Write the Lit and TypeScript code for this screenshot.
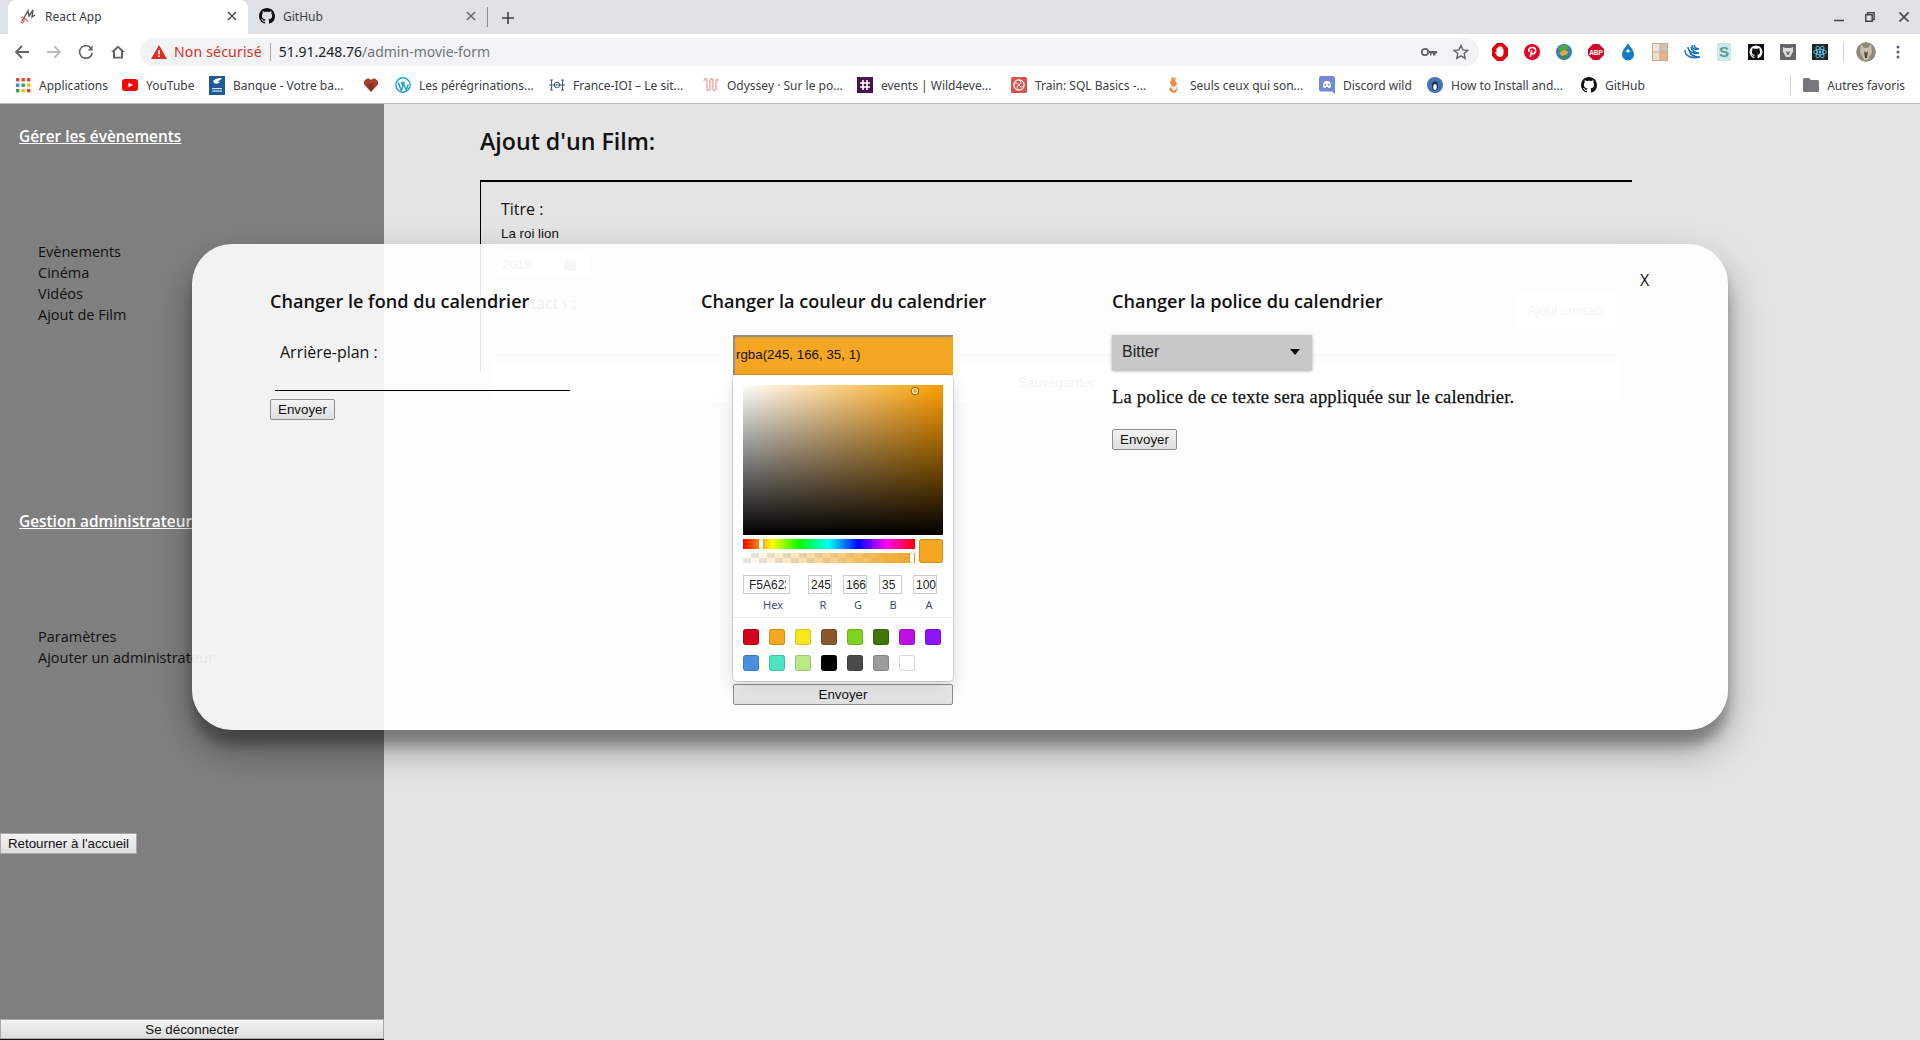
import { LitElement, html, svg, css } from "lit";
import { customElement } from "lit/decorators.js";

const OCTO = "M8 0C3.58 0 0 3.58 0 8c0 3.54 2.29 6.53 5.47 7.59.4.07.55-.17.55-.38 0-.19-.01-.82-.01-1.49-2.01.37-2.53-.49-2.69-.94-.09-.23-.48-.94-.82-1.13-.28-.15-.68-.52-.01-.53.63-.01 1.08.58 1.23.82.72 1.21 1.87.87 2.33.66.07-.52.28-.87.51-1.07-1.78-.2-3.64-.89-3.64-3.95 0-.87.31-1.59.82-2.15-.08-.2-.36-1.02.08-2.12 0 0 .67-.21 2.2.82.64-.18 1.32-.27 2-.27.68 0 1.36.09 2 .27 1.53-1.04 2.2-.82 2.2-.82.44 1.1.16 1.92.08 2.12.51.56.82 1.27.82 2.15 0 3.07-1.87 3.75-3.65 3.95.29.25.54.73.54 1.48 0 1.07-.01 1.93-.01 2.2 0 .21.15.46.55.38A8.013 8.013 0 0016 8c0-4.42-3.58-8-8-8z";

const octo = (fill = "#111") => html`<svg width="16" height="16" viewBox="0 0 16 16"><path fill=${fill} d=${OCTO}></path></svg>`;

const icons = {
  apps: html`<svg width="16" height="16" viewBox="0 0 16 16">
    ${[["#ea4335", "#ea4335", "#ea4335"], ["#4285f4", "#34a853", "#fbbc05"], ["#34a853", "#fbbc05", "#ea4335"]].map((row, y) =>
      row.map((c, x) => svg`<rect x=${1 + x * 5.5} y=${1 + y * 5.5} width="3.4" height="3.4" fill=${c}></rect>`))}
  </svg>`,
  youtube: html`<svg width="16" height="16" viewBox="0 0 16 16"><rect x="0" y="2" width="16" height="12" rx="3" fill="#f00"></rect><path d="M6.4 5.4v5.2L11 8z" fill="#fff"></path></svg>`,
  banque: html`<svg width="16" height="19" viewBox="0 0 16 19"><rect width="16" height="19" fill="#1d5c94"></rect><path d="M4 5c3-3 6-3 9-3-1 2-3 3-5 3l3 1c-2 2-4 2-6 1z" fill="#fff"></path><rect x="3" y="12" width="10" height="1.2" fill="#cfe0ee"></rect><rect x="3" y="14.5" width="10" height="1.2" fill="#cfe0ee"></rect></svg>`,
  heart: html`<svg width="16" height="14" viewBox="0 0 16 14"><path d="M8 14L1 6.5V3l3-2.5h2L8 2l2-1.5h2L15 3v3.5z" fill="#a8412f"></path><path d="M8 14L4 6l4-1 4 1z" fill="#8c2f22"></path></svg>`,
  wp: html`<svg width="16" height="16" viewBox="0 0 16 16"><circle cx="8" cy="8" r="7.2" fill="none" stroke="#21a0d2" stroke-width="1.4"></circle><path d="M3.2 5.6l3.1 7.8 1.7-4.8-1.2-3M6 5.6h3.6M8.2 5.6l3 7.6 2-5.6" fill="none" stroke="#21a0d2" stroke-width="1.5"></path></svg>`,
  ioi: html`<svg width="16" height="12" viewBox="0 0 16 12"><path d="M1 1h3M2.500 1v10M1 11h3M12 1h3M13.500 1v10M12 11h3" stroke="#3d5a80" stroke-width="1" fill="none"></path><circle cx="8" cy="6" r="2.800" fill="none" stroke="#3d5a80"></circle><path d="M0 6h16" stroke="#3d5a80"></path></svg>`,
  odyssey: html`<svg width="16" height="14" viewBox="0 0 16 14"><path d="M1 3c0-3 3-3 3 0v7c0 3 3 3 3 0V3c0-3 3-3 3 0v7c0 3 3 3 3 0V3c0-2 2-2 2 0" fill="none" stroke="#f4a6a6" stroke-width="1.400"></path></svg>`,
  slack: html`<svg width="16" height="16" viewBox="0 0 16 16"><rect width="16" height="16" fill="#4a154b"></rect><path d="M6 3v10M10 3v10M3 6h10M3 10h10" stroke="#fff" stroke-width="1.600"></path><path d="M7 7h2v2H7z" fill="#4a154b"></path></svg>`,
  sql: html`<svg width="16" height="16" viewBox="0 0 16 16"><rect width="16" height="16" rx="1.500" fill="#d9534f"></rect><circle cx="8" cy="8" r="5.200" fill="none" stroke="#fff" stroke-width="1.200"></circle><path d="M8 3c3 2 2 4 0 5s-3 3 0 5M3 8c2-3 4-2 5 0s3 3 5 0" fill="none" stroke="#fff" stroke-width="1"></path></svg>`,
  seuls: html`<svg width="14" height="18" viewBox="0 0 14 18"><path d="M5 1l4 1-1 3 2 2-1 3 2 3-3 4-4-1-2-3 3-3-2-3z" fill="#f08a3c"></path><path d="M4 11l5-1 1 3-4 2z" fill="#eee"></path><path d="M5 1l3 1-1 2z" fill="#ccc"></path></svg>`,
  discord: html`<svg width="16" height="18" viewBox="0 0 16 18"><path d="M2.500 0h11A2.500 2.500 0 0116 2.500V18l-3-2.500H2.500A2.500 2.500 0 010 13V2.500A2.500 2.500 0 012.500 0z" fill="#7289da"></path><path d="M4 11c-.2-2.500.5-4.500 1.500-5.500 1.500-.6 3.500-.6 5 0C11.500 6.500 12.200 8.500 12 11c-1 .8-2 1-2.500 1L9 11H7l-.5 1c-.5 0-1.500-.2-2.500-1z" fill="#fff"></path><circle cx="6.300" cy="8.800" r="1" fill="#7289da"></circle><circle cx="9.700" cy="8.800" r="1" fill="#7289da"></circle></svg>`,
  howto: html`<svg width="16" height="16" viewBox="0 0 16 16"><circle cx="8" cy="8" r="8" fill="#4472b8"></circle><ellipse cx="8" cy="9" rx="3" ry="4.500" fill="#1b2a3f"></ellipse><ellipse cx="8" cy="10" rx="1.800" ry="3" fill="#fff"></ellipse></svg>`,
  folder: html`<svg width="16" height="14" viewBox="0 0 16 14"><path d="M1.500 0H6l2 2h6.500A1.500 1.500 0 0116 3.500v9a1.500 1.500 0 01-1.500 1.500h-13A1.500 1.500 0 010 12.500v-11A1.500 1.500 0 011.500 0z" fill="#75787c"></path></svg>`,
};

const bookmarks = [
  { icon: icons.apps, label: "Applications", width: 107 },
  { icon: icons.youtube, label: "YouTube", width: 87 },
  { icon: icons.banque, label: "Banque - Votre ba...", width: 154 },
  { icon: icons.heart, label: "", width: 32 },
  { icon: icons.wp, label: "Les pérégrinations...", width: 154 },
  { icon: icons.ioi, label: "France-IOI – Le sit...", width: 154 },
  { icon: icons.odyssey, label: "Odyssey · Sur le po...", width: 154 },
  { icon: icons.slack, label: "events | Wild4eve...", width: 154 },
  { icon: icons.sql, label: "Train: SQL Basics -...", width: 155 },
  { icon: icons.seuls, label: "Seuls ceux qui son...", width: 153 },
  { icon: icons.discord, label: "Discord wild", width: 108 },
  { icon: icons.howto, label: "How to Install and...", width: 154 },
  { icon: octo(), label: "GitHub", width: 100 },
];

const extensions = [
  html`<svg width="16" height="18" viewBox="0 0 16 18"><path d="M5 0h6l5 5v8l-5 5H5l-5-5V5z" fill="#e2000f"></path><path d="M4.500 9V5.500a.8.800 0 011.500 0V4a.8.800 0 011.500 0v-.3a.8.800 0 011.500 0V4a.8.800 0 011.500 0v2a.8.800 0 011 0v4c0 2.500-1.500 4-3.500 4S5 13 4 11L3 9.500c.4-.6 1-.6 1.500-.5z" fill="#fff"></path></svg>`,
  html`<svg width="16" height="18" viewBox="0 0 16 16"><circle cx="8" cy="8" r="8" fill="#e60023"></circle><path d="M6.300 13l1.500-7M5 8c-1-3 1-4.500 3.300-4.500S12 5 11.500 7.500 8.500 10.500 7.500 9" fill="none" stroke="#fff" stroke-width="1.600"></path></svg>`,
  html`<svg width="16" height="16" viewBox="0 0 16 16"><circle cx="8" cy="8" r="8" fill="#2f7ec2"></circle><path d="M2 4c3-3 7-4 10-2l1 3-4 2-5 1z" fill="#57a646"></path><path d="M3 9l5-3 5 2-3 3-4 1z" fill="#e8a93a"></path><path d="M5 13l6-2 1 2-3 3z" fill="#3a8f4a"></path></svg>`,
  html`<svg width="16" height="16" viewBox="0 0 16 16"><path d="M5 0h6l5 5v6l-5 5H5l-5-5V5z" fill="#c70d2c"></path><text x="8" y="10.500" text-anchor="middle" font-family="Liberation Sans" font-size="6.500" font-weight="700" fill="#fff">ABP</text></svg>`,
  html`<svg width="12" height="18" viewBox="0 0 12 18"><path d="M6 0c2 4 6 7 6 11.500A6 6 0 010 11.500C0 7 4 4 6 0z" fill="#0f7dc2"></path><path d="M1.500 10L4 8l2 2 2-2 2.500 2L6 6z" fill="#fff"></path></svg>`,
  html`<svg width="16" height="18" viewBox="0 0 16 18"><rect width="16" height="18" fill="#bbada0"></rect><rect x="1" y="1" width="6.500" height="7.500" fill="#eee4da"></rect><rect x="8.500" y="1" width="6.500" height="7.500" fill="#cdc1b4"></rect><rect x="1" y="9.500" width="6.500" height="7.500" fill="#ede0c8"></rect><rect x="8.500" y="9.500" width="6.500" height="7.500" fill="#f2b179"></rect></svg>`,
  html`<svg width="16" height="18" viewBox="0 0 16 18"><path d="M1 7c0 6 6 9 15 7-6 0-10-2-11-7M4 4c0 5 5 7 11 6-5 0-7-2-8-6M8 2c0 4 3 5 7 4-3 0-4-1-5-4" fill="none" stroke="#1a78c2" stroke-width="1.500"></path></svg>`,
  html`<svg width="16" height="18" viewBox="0 0 16 18"><rect x="1" y="0" width="14" height="18" fill="#cfe9e6"></rect><text x="8" y="14" text-anchor="middle" font-family="Liberation Sans" font-size="15" font-weight="700" fill="#4e9c95">S</text></svg>`,
  html`<svg width="16" height="16" viewBox="0 0 16 16"><rect width="16" height="16" fill="#111"></rect><g transform="translate(1.500 1.500) scale(.81)"><path fill="#fff" d=${OCTO}></path></g></svg>`,
  html`<svg width="16" height="16" viewBox="0 0 16 16"><rect width="16" height="16" fill="#666"></rect><path d="M3 3l2 1h6l2-1v5l-3 5H6L3 8z" fill="#ddd"></path><path d="M6 7l2 1 2-1-1 4H7z" fill="#777"></path></svg>`,
  html`<svg width="16" height="16" viewBox="0 0 16 16"><rect width="16" height="16" fill="#20232a"></rect><g fill="none" stroke="#61dafb" stroke-width=".8"><ellipse cx="8" cy="8" rx="6.500" ry="2.600"></ellipse><ellipse cx="8" cy="8" rx="6.500" ry="2.600" transform="rotate(60 8 8)"></ellipse><ellipse cx="8" cy="8" rx="6.500" ry="2.600" transform="rotate(120 8 8)"></ellipse></g><circle cx="8" cy="8" r="1.300" fill="#61dafb"></circle></svg>`,
];

const swatches = [
  "#D0021B", "#F5A623", "#F8E71C", "#8B572A", "#7ED321", "#417505", "#BD10E0", "#9013FE",
  "#4A90E2", "#50E3C2", "#B8E986", "#000000", "#4A4A4A", "#9B9B9B", "#FFFFFF",
];

@customElement("app-root")
export class AppRoot extends LitElement {
  static styles = css`
    :host {
      display: flex;
      flex-direction: column;
      position: relative;
      width: 1920px;
      height: 1040px;
      overflow: hidden;
      font-family: "Open Sans", sans-serif;
      color: #111;
    }

    /* browser chrome */
    .ui { font-family: "Noto Sans", sans-serif; font-size: 12px; color: #3c4043; }
    .tabstrip {
      display: flex;
      align-items: flex-end;
      height: 34px;
      background: #dee1e6;
      padding-left: 8px;
      flex: none;
    }
    .tab {
      display: flex;
      align-items: center;
      width: 240px;
      height: 34px;
      padding: 0 11px 2px 12px;
      box-sizing: border-box;
      gap: 9px;
    }
    .tab.active { background: #fff; border-radius: 8px 8px 0 0; }
    .tab .title { flex: 1; }
    .tab-sep { width: 1px; height: 20px; background: #888c91; margin: 0 0 7px 0; }
    .tab.second { width: 239px; padding-left: 11px; gap: 8px; }
    .plus { margin: 0 0 10px 14px; display: flex; }
    .win { margin-left: auto; display: flex; gap: 16px; align-items: center; padding: 0 11px 9px 0; height: 16px; }
    .win svg { display: block; }
    .win .restore { margin-left: 5px; }
    .win .shut { margin-left: 8px; }

    .toolbar {
      display: flex;
      align-items: center;
      height: 36px;
      padding: 0 6px;
      background: #fff;
      flex: none;
    }
    .slot { width: 32px; height: 28px; display: flex; align-items: center; justify-content: center; flex: none; }
    .omni {
      display: flex;
      align-items: center;
      flex: 1;
      height: 28px;
      margin: 0 5px 0 6px;
      padding: 0 2px 0 11px;
      background: #f1f3f4;
      border-radius: 14px;
      font-size: 14px;
    }
    .omni > span { padding-bottom: 2px; }
    .insecure { color: #d93025; margin-left: 7px; letter-spacing: 0.2px; }
    .omni > .omni-sep { width: 1px; height: 18px; padding: 0; background: #a9acb0; margin: 0 8px 0 8px; }
    .host { color: #202124; }
    .path { color: #6f7479; }
    .omni-right { margin-left: auto; display: flex; align-items: center; gap: 0; }
    .tool-sep { width: 1px; height: 20px; background: #d2d4d7; margin: 0 12px 0 7px; flex: none; }
    .avatar { width: 20px; height: 20px; border-radius: 50%; display: block; flex: none; }
    .dots { margin-left: 6px; }

    .bookmarks {
      display: flex;
      align-items: center;
      height: 34px;
      box-sizing: border-box;
      padding: 0 0 3px 15px;
      background: #fff;
      border-bottom: 1px solid #b7b9bb;
      flex: none;
    }
    .bm { display: flex; align-items: center; gap: 8px; flex: none; white-space: nowrap; }
    .bm .ic { width: 16px; display: flex; justify-content: center; flex: none; }
    .bm-end { margin-left: auto; display: flex; align-items: center; gap: 8px; padding-right: 15px; }
    .bm-sep { width: 1px; height: 20px; background: #d2d4d7; margin-right: 4px; }

    /* page */
    .page { display: flex; flex: 1; min-height: 0; background: #e4e4e4; }
    .sidebar {
      display: flex;
      flex-direction: column;
      width: 384px;
      flex: none;
      box-sizing: border-box;
      background: #7f7f7f;
      border-bottom: 1px solid #111;
      padding-top: 22px;
    }
    .side-title {
      margin-left: 19px;
      color: #fff;
      font-size: 15.4px;
      font-weight: 600;
      line-height: 22px;
      text-decoration: underline;
      white-space: nowrap;
    }
    .side-list {
      list-style: none;
      margin: 93px 0 0 38px;
      padding: 0;
      font-size: 14.5px;
      line-height: 21px;
      white-space: nowrap;
    }
    .side-title.second { margin-top: 186px; }
    button {
      font-family: "Liberation Sans", sans-serif;
      font-size: 13.333px;
      height: 21px;
      padding: 0 6px;
      background: linear-gradient(#f4f4f4, #dedede);
      border: 1px solid #8e8e8e;
      border-radius: 2px;
      color: #111;
      box-sizing: border-box;
    }
    .back { align-self: flex-start; width: 137px; margin-top: 165px; border-color: #a9a9a9; border-radius: 0; }
    .logout { width: 100%; height: 20px; margin-top: auto; padding: 0; border-color: #a9a9a9; border-radius: 0; }

    .main { flex: 1; padding: 21px 0 0 96px; }
    .main h1 { margin: 0 0 22px; font-size: 23.2px; font-weight: 600; line-height: 33px; white-space: nowrap; }
    .form {
      width: 1152px;
      height: 192px;
      box-sizing: border-box;
      border-top: 2px solid #000;
      border-left: 1px solid #000;
      padding: 16px 0 0 15px;
    }
    .field-label { margin-left: 5px; font-size: 16px; line-height: 22px; }
    .field-value {
      width: 1121px;
      box-sizing: border-box;
      margin-top: 6px;
      padding: 0 0 5px 5px;
      border-bottom: 2px solid #c9c9c9;
      font: 13.333px/15px "Liberation Sans", sans-serif;
    }
    .date {
      display: flex;
      align-items: center;
      justify-content: space-between;
      width: 93px;
      height: 21px;
      box-sizing: border-box;
      margin: 6px 0 0 1px;
      padding: 0 14px 0 5px;
      background: #fff;
      border-radius: 3px;
      font: 13.333px "Liberation Sans", sans-serif;
      color: #888;
    }
    .contact-row {
      display: flex;
      justify-content: space-between;
      width: 1121px;
      height: 65px;
      box-sizing: border-box;
      margin-top: 16px;
      border-bottom: 2px solid #c9c9c9;
    }
    .contact-row .field-label { margin-top: 1px; color: #666; }
    .add-contact {
      width: 102px;
      height: 38px;
      background: #fff;
      border: 1px solid #d8d8d8;
      color: #888;
    }
    .save {
      width: 1131px;
      height: 43px;
      box-sizing: border-box;
      margin: 5px 0 0 -5px;
      padding-right: 1px;
      display: flex;
      align-items: center;
      justify-content: center;
      background: #fff;
      border: 1px solid #d8d8d8;
      font: 13.333px "Liberation Sans", sans-serif;
      color: #888;
    }

    /* modal */
    .modal {
      position: absolute;
      left: 192px;
      top: 244px;
      width: 1536px;
      height: 486px;
      box-sizing: border-box;
      display: flex;
      padding: 44px 0 0 78px;
      background: rgba(255, 255, 255, 0.9);
      border-radius: 40px;
      box-shadow: 0 19px 38px rgba(0, 0, 0, 0.34), 0 15px 12px rgba(0, 0, 0, 0.26);
    }
    .close { position: absolute; left: 1448px; top: 25px; font-size: 16px; line-height: 22px; }
    .col { flex: none; }
    .col.one { width: 431px; }
    .col.two { width: 411px; }
    .col h2 { margin: 0; font-size: 18.1px; font-weight: 600; line-height: 26px; white-space: nowrap; }
    .bg-label { margin: 27px 0 0 10px; font-size: 16px; line-height: 22px; }
    .bg-line { width: 295px; height: 1px; margin: 27px 0 0 5px; background: #000; }
    .col.one button { display: block; margin-top: 8px; width: 65px; }

    .color-input {
      width: 220px;
      height: 40px;
      box-sizing: border-box;
      margin: 21px 0 0 32px;
      padding: 0 0 3px 1px;
      display: flex;
      align-items: center;
      background: #f5a623;
      border-top: 2px solid #8f8f8f;
      border-left: 2px solid #8f8f8f;
      font: 13.333px "Liberation Sans", sans-serif;
    }
    .picker {
      width: 220px;
      height: 306px;
      box-sizing: border-box;
      margin-left: 32px;
      padding: 10px;
      background: #fff;
      border-radius: 4px;
      box-shadow: 0 0 0 1px rgba(0, 0, 0, 0.12), 0 8px 16px rgba(0, 0, 0, 0.15);
      position: relative;
    }
    .sat {
      position: relative;
      width: 200px;
      height: 150px;
      background: linear-gradient(to top, #000, transparent), linear-gradient(to right, #fff, #ff9e00);
    }
    .sat i {
      position: absolute;
      left: 169px;
      top: 3px;
      width: 4px;
      height: 4px;
      border: 1.5px solid #fff;
      border-radius: 50%;
      box-shadow: 0 0 1px 1px rgba(0, 0, 0, 0.4);
    }
    .sliders { display: flex; justify-content: space-between; margin-top: 4px; }
    .bars { width: 172px; }
    .hue, .alpha { position: relative; height: 10px; }
    .hue { background: linear-gradient(to right, #f00 0%, #ff0 17%, #0f0 33%, #0ff 50%, #00f 67%, #f0f 83%, #f00 100%); }
    .alpha {
      margin-top: 4px;
      background: linear-gradient(to right, rgba(245, 166, 35, 0), #f5a623),
        repeating-conic-gradient(#e6e6e6 0 25%, #fff 0 50%) 0 0 / 16px 10px;
    }
    .hue i, .alpha i {
      position: absolute;
      top: 0;
      width: 4px;
      height: 10px;
      background: #fff;
      border-radius: 1px;
      box-shadow: 0 0 1px rgba(0, 0, 0, 0.6);
    }
    .hue i { left: 16px; }
    .alpha i { left: 167px; }
    .current { width: 24px; height: 24px; background: #f5a623; border-radius: 3px; box-shadow: inset 0 0 0 1px rgba(0, 0, 0, 0.15); }
    .inputs { display: flex; margin-top: 12px; }
    .inputs input {
      width: 24px;
      height: 19px;
      box-sizing: border-box;
      margin: 0 11px 0 0;
      padding: 0 0 0 2px;
      border: 1px solid #ccc;
      border-radius: 0;
      outline: none;
      font: 12px "Liberation Sans", sans-serif;
      color: #222;
      background: #fff;
    }
    .inputs input.hex { width: 47px; margin-right: 18px; padding: 0 3px 0 5px; }
    .inputs input.blue { width: 23px; margin-left: 1px; }
    .labels {
      display: grid;
      grid-template-columns: 60px 40px 30px 40px 32px;
      margin-top: 4px;
      font: 11px/14px "Noto Sans", sans-serif;
      color: #3d4a6b;
      text-align: center;
    }
    .swatches {
      display: grid;
      grid-template-columns: repeat(8, 16px);
      gap: 10px;
      margin: 5px -10px 0;
      padding: 11px 10px 0;
      border-top: 1px solid #eee;
    }
    .swatches span { width: 16px; height: 16px; border-radius: 3px; box-shadow: inset 0 0 0 1px rgba(0, 0, 0, 0.15); }
    .send-wide { display: block; width: 220px; margin: 3px 0 0 32px; }

    .select {
      display: flex;
      align-items: center;
      justify-content: space-between;
      width: 200px;
      height: 35px;
      box-sizing: border-box;
      margin-top: 21px;
      padding: 0 12px 1px 10px;
      background: #c8c8c8;
      box-shadow: 0 1px 3px rgba(0, 0, 0, 0.35);
      font: 16px "Liberation Sans", sans-serif;
      color: #222;
    }
    .arrow { width: 0; height: 0; border: 5px solid transparent; border-top: 6px solid #000; border-bottom: 0; }
    .sample {
      margin: 16px 0 0;
      font: 18.5px/22px "Liberation Serif", serif;
      letter-spacing: 0.2px;
      -webkit-text-stroke: 0.25px #111;
      white-space: nowrap;
    }
    .col.three button { display: block; margin-top: 21px; width: 65px; }
  `;

  render() {
    return html`
      <div class="ui tabstrip">
        <div class="tab active">
          <svg width="16" height="16" viewBox="0 0 16 16">
            <path d="M2 13L8 3l1 5 4-6-1 7 3-2" fill="none" stroke="#555" stroke-width="1.400"></path>
            <path d="M1 10c2-2 4 0 3 3s-3 2-3 0M5 10l3 4" fill="none" stroke="#e0606a" stroke-width="1.200"></path>
          </svg>
          <span class="title">React App</span>
          <svg width="10" height="10" viewBox="0 0 10 10"><path d="M1 1l8 8M9 1L1 9" stroke="#45494e" stroke-width="1.400"></path></svg>
        </div>
        <div class="tab second">
          ${octo("#111")}
          <span class="title">GitHub</span>
          <svg width="10" height="10" viewBox="0 0 10 10"><path d="M1 1l8 8M9 1L1 9" stroke="#5f6368" stroke-width="1.400"></path></svg>
        </div>
        <div class="tab-sep"></div>
        <div class="plus"><svg width="12" height="12" viewBox="0 0 12 12"><path d="M6 0v12M0 6h12" stroke="#3c4043" stroke-width="1.600"></path></svg></div>
        <div class="win">
          <svg width="10" height="10" viewBox="0 0 10 10"><path d="M0 8.500h10" stroke="#45494e" stroke-width="1.600"></path></svg>
          <svg class="restore" width="10" height="10" viewBox="0 0 10 10"><path d="M2.500 2.500V.8h6.700v6.700H7.500M.8 2.800h6.400v6.400H.8z" fill="none" stroke="#45494e" stroke-width="1.500"></path></svg>
          <svg class="shut" width="10" height="10" viewBox="0 0 10 10"><path d="M.5.500l9 9M9.500.500l-9 9" stroke="#45494e" stroke-width="1.600"></path></svg>
        </div>
      </div>

      <div class="ui toolbar">
        <div class="slot"><svg width="16" height="16" viewBox="0 0 16 16"><path d="M15 8H2M8 2L2 8l6 6" fill="none" stroke="#5f6368" stroke-width="1.800"></path></svg></div>
        <div class="slot"><svg width="16" height="16" viewBox="0 0 16 16"><path d="M1 8h13M8 2l6 6-6 6" fill="none" stroke="#babcbe" stroke-width="1.800"></path></svg></div>
        <div class="slot"><svg width="16" height="16" viewBox="0 0 16 16"><path d="M13.500 5.500A6.200 6.200 0 108 14.200 6.200 6.200 0 0014.200 9" fill="none" stroke="#5f6368" stroke-width="1.700"></path><path d="M14.600 1.500v5h-5z" fill="#5f6368"></path></svg></div>
        <div class="slot"><svg width="16" height="16" viewBox="0 0 16 16"><path d="M8 1.500L1 8h2v6.500h10V8h2zM5 12.800V7l3-3 3 3v5.800z" fill="#5f6368"></path></svg></div>
        <div class="omni">
          <svg width="16" height="14" viewBox="0 0 16 14"><path d="M8 0l8 14H0z" fill="#d93025"></path><path d="M7.200 5h1.600v4.500H7.200zM7.200 10.500h1.600V12H7.200z" fill="#fff"></path></svg>
          <span class="insecure">Non sécurisé</span>
          <span class="omni-sep"></span>
          <span class="host">51.91.248.76</span><span class="path">/admin-movie-form</span>
          <div class="omni-right">
            <div class="slot"><svg width="16" height="10" viewBox="0 0 16 10"><circle cx="4" cy="5" r="3.200" fill="none" stroke="#5f6368" stroke-width="1.800"></circle><path d="M7 4h9v2.500h-1.500V8.500H12V6.500h-1.500V8.500H9V6H7z" fill="#5f6368"></path></svg></div>
            <div class="slot"><svg width="16" height="16" viewBox="0 0 16 16"><path d="M8 1.500l2 4.400 4.800.5-3.600 3.200 1 4.700L8 11.900l-4.200 2.400 1-4.700L1.200 6.400 6 5.900z" fill="none" stroke="#5f6368" stroke-width="1.400"></path></svg></div>
          </div>
        </div>
        ${extensions.map((e) => html`<div class="slot">${e}</div>`)}
        <div class="tool-sep"></div>
        <svg class="avatar" viewBox="0 0 20 20">
          <circle cx="10" cy="10" r="10" fill="#8d8a7c"></circle>
          <path d="M5 2l3 4 4 0 3-4 1 8-4 8H8L4 10z" fill="#c7bfa9"></path>
          <path d="M8 9l2 2 2-2-1 7H9z" fill="#4d473c"></path>
        </svg>
        <div class="slot dots"><svg width="4" height="16" viewBox="0 0 4 16"><circle cx="2" cy="3" r="1.500" fill="#5f6368"></circle><circle cx="2" cy="8" r="1.500" fill="#5f6368"></circle><circle cx="2" cy="13" r="1.500" fill="#5f6368"></circle></svg></div>
      </div>

      <div class="ui bookmarks">
        ${bookmarks.map((b) => html`<div class="bm" style="width:${b.width}px"><span class="ic">${b.icon}</span>${b.label ? html`<span>${b.label}</span>` : ""}</div>`)}
        <div class="bm-end">
          <span class="bm-sep"></span>
          ${icons.folder}
          <span>Autres favoris</span>
        </div>
      </div>

      <div class="page">
        <aside class="sidebar">
          <div class="side-title">Gérer les évènements</div>
          <ul class="side-list">
            <li>Evènements</li>
            <li>Cinéma</li>
            <li>Vidéos</li>
            <li>Ajout de Film</li>
          </ul>
          <div class="side-title second">Gestion administrateur</div>
          <ul class="side-list">
            <li>Paramètres</li>
            <li>Ajouter un administrateur</li>
          </ul>
          <button class="back">Retourner à l'accueil</button>
          <button class="logout">Se déconnecter</button>
        </aside>
        <main class="main">
          <h1>Ajout d'un Film:</h1>
          <div class="form">
            <div class="field-label">Titre :</div>
            <div class="field-value">La roi lion</div>
            <div class="date">
              2019
              <svg width="12" height="12" viewBox="0 0 12 12"><path d="M0 2h12v10H0zM2.500 0h2v2h-2zM7.500 0h2v2h-2z" fill="#999"></path></svg>
            </div>
            <div class="contact-row">
              <div class="field-label">Contact › :</div>
              <button class="add-contact">Ajout contact</button>
            </div>
            <div class="save">Sauvegarder</div>
          </div>
        </main>
      </div>

      <section class="modal">
        <div class="close">X</div>
        <div class="col one">
          <h2>Changer le fond du calendrier</h2>
          <div class="bg-label">Arrière-plan :</div>
          <div class="bg-line"></div>
          <button>Envoyer</button>
        </div>
        <div class="col two">
          <h2>Changer la couleur du calendrier</h2>
          <div class="color-input">rgba(245, 166, 35, 1)</div>
          <div class="picker">
            <div class="sat"><i></i></div>
            <div class="sliders">
              <div class="bars">
                <div class="hue"><i></i></div>
                <div class="alpha"><i></i></div>
              </div>
              <div class="current"></div>
            </div>
            <div class="inputs">
              <input class="hex" .value=${"F5A623"} />
              <input .value=${"245"} />
              <input .value=${"166"} />
              <input class="blue" .value=${"35"} />
              <input .value=${"100"} />
            </div>
            <div class="labels"><span>Hex</span><span>R</span><span>G</span><span>B</span><span>A</span></div>
            <div class="swatches">
              ${swatches.map((c) => html`<span style="background:${c}"></span>`)}
            </div>
          </div>
          <button class="send-wide">Envoyer</button>
        </div>
        <div class="col three">
          <h2>Changer la police du calendrier</h2>
          <div class="select">Bitter<span class="arrow"></span></div>
          <p class="sample">La police de ce texte sera appliquée sur le calendrier.</p>
          <button>Envoyer</button>
        </div>
      </section>
    `;
  }
}
